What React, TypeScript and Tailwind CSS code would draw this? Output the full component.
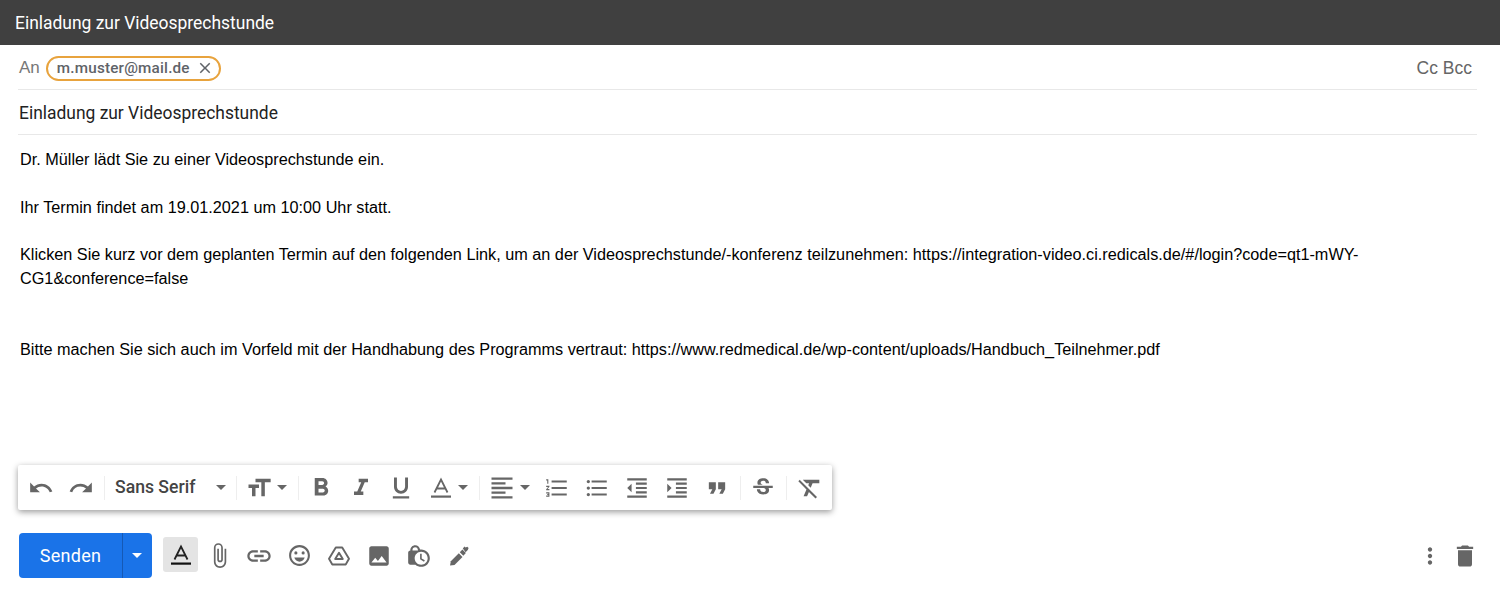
import {
  MdAttachFile,
  MdClose,
  MdDelete,
  MdFormatAlignLeft,
  MdFormatBold,
  MdFormatClear,
  MdFormatIndentDecrease,
  MdFormatIndentIncrease,
  MdFormatItalic,
  MdFormatListBulleted,
  MdFormatListNumbered,
  MdFormatQuote,
  MdFormatSize,
  MdFormatUnderlined,
  MdInsertPhoto,
  MdLink,
  MdLockClock,
  MdMoreVert,
  MdOutlineEmojiEmotions,
  MdRedo,
  MdStrikethroughS,
  MdUndo,
} from "react-icons/md";
import type { ReactNode } from "react";

const iconClass = "text-[26px] text-[#666666]";

function Caret() {
  return <div className="w-0 h-0 shrink-0 border-x-[5px] border-x-transparent border-t-[5px] border-t-[#666666]" />;
}

function Sep() {
  return <div className="w-px h-6 shrink-0 bg-[#eeeeee]" />;
}

function TbBtn({ children, w = "w-10" }: { children: ReactNode; w?: string }) {
  return <div className={`${w} h-full flex justify-center items-center shrink-0`}>{children}</div>;
}

function LetterA({ bar = "#666666", stroke = "#666666" }: { bar?: string; stroke?: string }) {
  return (
    <svg width="24" height="24" viewBox="0 0 24 24" fill="none">
      <path d="M5.500 16.500 12 3.500l6.500 13M7.600 12.500h8.800" stroke={stroke} strokeWidth="1.800" />
      <rect x="2" y="19.500" width="20" height="2.200" fill={bar} />
    </svg>
  );
}

function DriveIcon() {
  return (
    <svg width="24" height="24" viewBox="0 0 24 24" fill="none" stroke="#666666" strokeWidth="1.900" strokeLinejoin="round">
      <path d="M8.800 3.500h6.400L22 14.800l-3.300 5.700H5.300L2 14.800z" />
      <path d="M12 8.800 15.800 15H8.200z" />
    </svg>
  );
}

function PenIcon() {
  return (
    <svg width="24" height="24" viewBox="0 0 24 24" fill="#666666">
      <path d="m3 21.500.8-4.300 8-8 3.700 3.700-8 8z" />
      <path d="m12.800 8.200 2.600-2.600 3.500 3.500-2.600 2.600z" />
      <path d="m15.800 4.600 1.700-2 1.100 1 1.700-.8 1.300 1.300-.8 1.900-2.200 2.300z" />
    </svg>
  );
}

export default function App() {
  return (
    <div className="w-[1500px] h-[591px] bg-white flex flex-col overflow-hidden font-['Roboto',sans-serif]">
      <div className="h-[45px] shrink-0 pt-px bg-[#404040] flex items-center pl-[15px] text-white text-[17.460px]">
        Einladung zur Videosprechstunde
      </div>

      <div className="mx-[18px] w-[1459px] h-[45px] shrink-0 pt-[2px] border-b border-[#e8e8e8] flex items-center justify-between">
        <div className="flex items-center pl-px">
          <span className="text-[#777777] text-[17px] font-['Liberation_Sans',sans-serif]">An</span>
          <div className="ml-[6px] h-[25px] w-[175px] rounded-full border-2 border-[#e8a33d] flex items-center pl-[9px] gap-[6px]">
            <span className="text-[15.250px] font-medium text-[#5f6368] tracking-[0.2px]">m.muster@mail.de</span>
            <MdClose className="text-[18px] text-[#5f6368]" />
          </div>
        </div>
        <span className="text-[#666666] text-[17.500px] font-['Liberation_Sans',sans-serif] mr-[5px]">Cc Bcc</span>
      </div>

      <div className="mx-[18px] w-[1459px] h-[45px] shrink-0 pl-px pt-[2px] border-b border-[#e8e8e8] flex items-center text-[#222222] text-[17.430px]">
        Einladung zur Videosprechstunde
      </div>

      <div className="pl-[20px] pt-[13px] h-[330px] shrink-0 w-[1370px] text-black text-[16.240px] leading-[23.700px] font-['Liberation_Sans',sans-serif]">
        <p>Dr. Müller lädt Sie zu einer Videosprechstunde ein.</p>
        <p className="mt-[24px]">Ihr Termin findet am 19.01.2021 um 10:00 Uhr statt.</p>
        <p className="mt-[24px]">
          Klicken Sie kurz vor dem geplanten Termin auf den folgenden Link, um an der Videosprechstunde/-konferenz teilzunehmen: https://integration-video.ci.redicals.de/#/login?code=qt1-mWY-CG1&amp;conference=false
        </p>
        <p className="mt-[47px]">
          Bitte machen Sie sich auch im Vorfeld mit der Handhabung des Programms vertraut: https://www.redmedical.de/wp-content/uploads/Handbuch_Teilnehmer.pdf
        </p>
      </div>

      <div className="ml-[18px] w-[814px] h-[45px] shrink-0 pl-[3px] bg-white rounded-[2px] shadow-[0_2px_6px_rgba(0,0,0,0.4)] flex items-center">
        <TbBtn><MdUndo className={iconClass} /></TbBtn>
        <TbBtn><MdRedo className={iconClass} /></TbBtn>
        <div className="ml-[3px]"><Sep /></div>
        <div className="w-[131px] shrink-0 flex items-center justify-between pl-[10px] pr-[10px]">
          <span className="text-[17.600px] font-medium text-[#444444]">Sans Serif</span>
          <Caret />
        </div>
        <Sep />
        <div className="w-[61px] shrink-0 flex items-center pl-[8px] gap-[4px]">
          <MdFormatSize className="text-[28px] text-[#666666]" />
          <Caret />
        </div>
        <Sep />
        <div className="ml-[2px]" />
        <TbBtn><MdFormatBold className="text-[30px] text-[#666666]" /></TbBtn>
        <TbBtn><MdFormatItalic className="text-[28px] text-[#666666]" /></TbBtn>
        <TbBtn><MdFormatUnderlined className="text-[28px] text-[#666666]" /></TbBtn>
        <div className="w-[58px] shrink-0 flex items-center pl-[8px] gap-[5px]">
          <LetterA />
          <Caret />
        </div>
        <Sep />
        <div className="w-[57px] shrink-0 flex items-center pl-[8px] gap-[4px]">
          <MdFormatAlignLeft className="text-[28px] text-[#666666]" />
          <Caret />
        </div>
        <TbBtn><MdFormatListNumbered className="text-[26px] text-[#666666]" /></TbBtn>
        <TbBtn><MdFormatListBulleted className="text-[26px] text-[#666666]" /></TbBtn>
        <TbBtn><MdFormatIndentDecrease className="text-[26px] text-[#666666]" /></TbBtn>
        <TbBtn><MdFormatIndentIncrease className="text-[26px] text-[#666666]" /></TbBtn>
        <TbBtn><MdFormatQuote className="text-[28px] text-[#666666]" /></TbBtn>
        <div className="ml-[3px]"><Sep /></div>
        <TbBtn w="w-[45px] pr-[2px]"><MdStrikethroughS className="text-[26px] text-[#666666]" /></TbBtn>
        <Sep />
        <TbBtn w="w-[44px] pl-[2px]"><MdFormatClear className="text-[28px] text-[#666666]" /></TbBtn>
      </div>

      <div className="mt-[23px] pl-[19px] pr-[21px] h-[45px] shrink-0 flex items-center justify-between">
        <div className="flex items-center">
          <div className="w-[133px] h-[45px] bg-[#1a73e8] rounded-[4px] flex text-white">
            <div className="w-[103px] flex justify-center items-center text-[18px] tracking-[0.3px]">Senden</div>
            <div className="flex-1 border-l border-[#1559b5] flex justify-center items-center pr-px">
              <div className="w-0 h-0 border-x-[5px] border-x-transparent border-t-[5px] border-t-white" />
            </div>
          </div>
          <div className="ml-[11px] mb-[2px] w-[35px] h-[35px] bg-[#e4e4e4] rounded-[3px] flex justify-center items-center">
            <LetterA bar="#111111" stroke="#222222" />
          </div>
          <div className="ml-px w-[40px] flex justify-center">
            <MdAttachFile className="text-[27px] text-[#666666]" />
          </div>
          <div className="w-[40px] flex justify-center"><MdLink className="text-[28px] text-[#666666]" /></div>
          <div className="w-[40px] flex justify-center"><MdOutlineEmojiEmotions className="text-[25px] text-[#666666]" /></div>
          <div className="w-[40px] flex justify-center"><DriveIcon /></div>
          <div className="w-[40px] flex justify-center"><MdInsertPhoto className="text-[26px] text-[#666666]" /></div>
          <div className="w-[40px] flex justify-center"><MdLockClock className="text-[26px] text-[#666666]" /></div>
          <div className="w-[40px] flex justify-center"><PenIcon /></div>
        </div>
        <div className="flex items-center gap-[8px]">
          <MdMoreVert className="text-[26px] text-[#666666]" />
          <MdDelete className="text-[28px] text-[#666666]" />
        </div>
      </div>
    </div>
  );
}
